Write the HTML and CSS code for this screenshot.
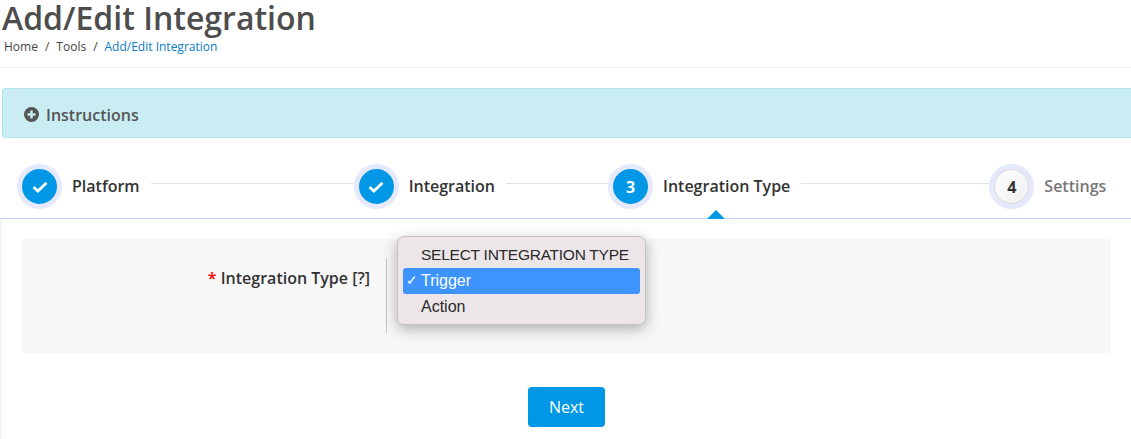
FILE: index.html
```html
<!DOCTYPE html>
<html lang="en">
<head>
    <meta charset="UTF-8">
    <meta name="viewport" content="width=device-width, initial-scale=1.0">
    <title>Add/Edit Integration</title>
    <link rel="stylesheet" href="styles.css">
</head>
<body>
    <div class="page-header">
        <h1>Add/Edit Integration</h1>
        <div class="breadcrumb">
            <span>Home</span>
            <span class="sep">/</span>
            <span>Tools</span>
            <span class="sep">/</span>
            <a href="#">Add/Edit Integration</a>
        </div>
    </div>

    <div class="alert-info">
        <svg class="plus-icon" width="15" height="15" viewBox="0 0 16 16">
            <circle cx="8" cy="8" r="8" fill="#555"/>
            <path d="M8 3.8v8.4M3.8 8h8.4" stroke="#caecf3" stroke-width="2.6"/>
        </svg>
        <span>Instructions</span>
    </div>

    <div class="stepper">
        <div class="step">
            <div class="circle">
                <svg width="16" height="12" viewBox="0 0 16 12"><path d="M1.5 6l4.4 4L14.500 1.800" fill="none" stroke="#fff" stroke-width="2.8"/></svg>
            </div>
            <span class="step-label">Platform</span>
        </div>
        <div class="line line-1"></div>
        <div class="step">
            <div class="circle">
                <svg width="16" height="12" viewBox="0 0 16 12"><path d="M1.5 6l4.4 4L14.500 1.800" fill="none" stroke="#fff" stroke-width="2.8"/></svg>
            </div>
            <span class="step-label">Integration</span>
        </div>
        <div class="line line-2"></div>
        <div class="step step-current">
            <div class="circle">3</div>
            <span class="step-label">Integration Type</span>
        </div>
        <div class="line line-3"></div>
        <div class="step step-todo">
            <div class="circle">4</div>
            <span class="step-label">Settings</span>
        </div>
    </div>

    <div class="tab-panel">
        <div class="form-box">
            <label class="form-label"><span class="required">*</span> Integration Type [?]</label>
            <div class="form-field"></div>
            <ul class="select-menu">
                <li class="placeholder">SELECT INTEGRATION TYPE</li>
                <li class="selected"><span class="tick">✓</span>Trigger</li>
                <li>Action</li>
            </ul>
        </div>
        <div class="actions">
            <button type="button" class="btn-next">Next</button>
        </div>
    </div>
</body>
</html>
```

FILE: styles.css
```css
/* General Reset */
* {
    margin: 0;
    padding: 0;
    box-sizing: border-box;
}

body {
    height: 439px;
    overflow: hidden;
    background: #fff;
    font-family: "Open Sans", sans-serif;
    color: #333;
}

/* Page Header */
.page-header {
    margin-left: 2px;
    height: 68px;
    border-bottom: 1px solid #f0f0f0;
}

.page-header h1 {
    font-size: 32px;
    font-weight: 600;
    line-height: 36px;
    color: #4d4d4d;
}

.breadcrumb {
    display: flex;
    gap: 7px;
    margin-top: 2px;
    padding-left: 2px;
    font-size: 12px;
    line-height: 17px;
    color: #444;
}

.breadcrumb a {
    color: #0a7cc0;
    text-decoration: none;
}

/* Instructions */
.alert-info {
    display: flex;
    align-items: center;
    gap: 7px;
    height: 50px;
    margin: 20px 0 0 2px;
    padding: 3px 0 0 21px;
    background: #caecf3;
    border: 1px solid #b0e2ea;
    border-right: none;
    border-radius: 4px 0 0 4px;
    font-size: 16px;
    font-weight: 600;
    color: #555;
}

/* Stepper */
.stepper {
    display: flex;
    align-items: center;
    height: 81px;
    padding: 17px 0 0 17px;
    border-bottom: 1px solid #c5d2f5;
}

.step {
    display: flex;
    align-items: center;
    gap: 10px;
}

.circle {
    display: flex;
    align-items: center;
    justify-content: center;
    width: 45px;
    height: 45px;
    border-radius: 50%;
    background: #0098e6;
    border: 5px solid #e5e9fb;
    font-size: 16px;
    font-weight: 700;
    color: #fff;
}

.step-label {
    padding-bottom: 2px;
    font-size: 16px;
    font-weight: 600;
    color: #333;
    white-space: nowrap;
}

.step-current {
    position: relative;
}

/* little arrow under the current step */
.step-current::after {
    content: "";
    position: absolute;
    left: 99px;
    bottom: -10px;
    border-left: 9px solid transparent;
    border-right: 9px solid transparent;
    border-bottom: 9px solid #0098e6;
}

.step-todo .circle {
    background: linear-gradient(135deg, #fff, #eee);
    box-shadow: inset 0 0 0 1px #d8d8d8;
    color: #333;
}

.step-todo .step-label {
    color: #777;
}

.line {
    height: 1px;
    margin: 0 0 7px 11px;
    background: #e2e2e2;
}

.line-1 { width: 203px; }
.line-2 { width: 102px; }
.line-3 { width: 188px; }

/* Tab Panel */
.tab-panel {
    height: 220px;
    padding: 20px 20px 0 22px;
    box-shadow: inset 2px 0 0 #f1f2fc;
}

.form-box {
    position: relative;
    display: flex;
    height: 114px;
    padding-top: 20px;
    background: #f7f7f7;
    border-radius: 4px;
}

.form-label {
    width: 348px;
    height: 38px;
    text-align: right;
    font-size: 16px;
    font-weight: 600;
    line-height: 38px;
    color: #333;
}

.required {
    color: #f00;
}

.form-field {
    width: 1px;
    height: 74px;
    margin-left: 16px;
    background: #c4c4c4;
}

/* Open native select menu */
.select-menu {
    position: absolute;
    left: 375px;
    top: -3px;
    width: 249px;
    height: 89px;
    padding: 5px;
    list-style: none;
    background: #ece6e9;
    border: 1px solid #c6c2c4;
    border-radius: 7px;
    box-shadow: 0 4px 14px rgba(0, 0, 0, 0.3);
    font-family: "Liberation Sans", Arial, sans-serif;
    font-size: 16px;
    color: #2a2a2a;
}

.select-menu li {
    position: relative;
    height: 26px;
    padding-left: 18px;
    line-height: 25px;
    white-space: nowrap;
}

.select-menu .placeholder {
    font-size: 15.5px;
    letter-spacing: -0.25px;
}

.select-menu .selected {
    background: #3d94ff;
    border-radius: 3px;
    color: #fff;
}

.tick {
    position: absolute;
    left: 3px;
    font-family: "DejaVu Sans", sans-serif;
    font-size: 14px;
}

/* Next Button */
.actions {
    display: flex;
    justify-content: center;
    margin-top: 34px;
}

.btn-next {
    width: 77px;
    height: 40px;
    border: none;
    border-radius: 4px;
    background: #0098e6;
    color: #fff;
    font-family: "Open Sans", sans-serif;
    font-size: 16px;
    font-weight: 500;
}
```
